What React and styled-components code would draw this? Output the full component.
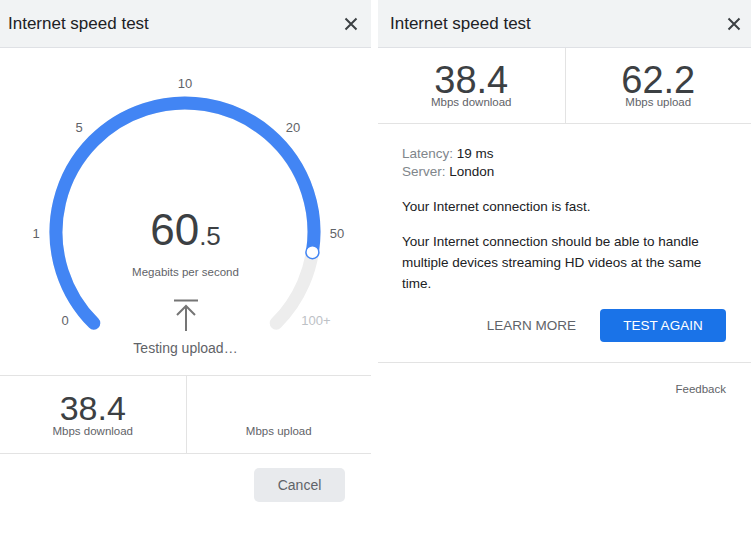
import React from 'react';
import styled, { createGlobalStyle } from 'styled-components';

const GlobalStyle = createGlobalStyle`
  html, body {
    margin: 0;
    padding: 0;
    background: #fff;
    overflow: hidden;
  }
  body {
    font-family: "Liberation Sans", Arial, sans-serif;
    color: #202124;
  }
`

const Page = styled.div`
  display: flex;
  gap: 7px;
  width: 751px;
  height: 541px;
`

const Panel = styled.div`
  display: flex;
  flex-direction: column;
  width: ${p => p.$width}px;
  flex-shrink: 0;
  background: #fff;
`

const Header = styled.div`
  display: flex;
  align-items: center;
  justify-content: space-between;
  height: 47px;
  padding: 0 ${p => p.$padR}px 0 ${p => p.$padL}px;
  background: #f1f3f4;
  border-bottom: 1px solid #dfe1e5;
`

const Title = styled.div`
  font-size: 17px;
  color: #202124;
`

const Close = styled.button`
  display: flex;
  padding: 0;
  border: 0;
  background: none;
  cursor: pointer;
`

const GaugeArea = styled.div`
  position: relative;
  height: 327px;
`

const Reading = styled.div`
  position: absolute;
  top: 160px;
  left: 0;
  right: 0;
  display: flex;
  flex-direction: column;
  align-items: center;
`

const Speed = styled.div`
  font-size: 44px;
  line-height: 44px;
  color: #3c4043;
`

const Decimal = styled.span`
  font-size: 26px;
`

const Unit = styled.div`
  margin-top: 7px;
  font-size: 11.5px;
  line-height: 14px;
  color: #5f6368;
`

const IconSlot = styled.div`
  display: flex;
  margin-top: 20px;
`

const Status = styled.div`
  margin-top: 7px;
  font-size: 14px;
  line-height: 18px;
  color: #5f6368;
`

const StatsRow = styled.div`
  display: grid;
  grid-template-columns: 1fr 1fr;
  height: ${p => p.$height}px;
  border-top: ${p => (p.$top ? '1px solid #e3e3e3' : '0')};
  border-bottom: 1px solid #e3e3e3;
`

const StatCell = styled.div`
  display: flex;
  flex-direction: column;
  align-items: center;
  justify-content: flex-end;
  padding-bottom: ${p => p.$pad}px;
  & + & {
    border-left: 1px solid #e3e3e3;
  }
`

const StatValue = styled.div`
  font-size: ${p => p.$size}px;
  line-height: ${p => p.$lh}px;
  color: #3c4043;
`

const StatLabel = styled.div`
  font-size: 11.5px;
  line-height: 14px;
  color: #5f6368;
`

const Footer = styled.div`
  display: flex;
  justify-content: flex-end;
  padding: 14px 26px 0;
`

const GreyButton = styled.button`
  width: 91px;
  height: 34px;
  border: 0;
  border-radius: 5px;
  background: #e8eaed;
  color: #5f6368;
  font-family: inherit;
  font-size: 14px;
`

const Details = styled.div`
  padding: 21px 25px 0 24px;
  font-size: 13.5px;
  line-height: 18px;
`

const Meta = styled.div`
  color: #80868b;
  & b {
    font-weight: normal;
    color: #202124;
  }
`

const Text = styled.p`
  margin: ${p => p.$mt}px 0 0;
  line-height: ${p => p.$lh}px;
  color: #202124;
`

const Actions = styled.div`
  display: flex;
  justify-content: flex-end;
  align-items: center;
  gap: 12px;
  margin: 15px -25px 0 -24px;
  padding: 0 25px 20px 0;
  border-bottom: 1px solid #e3e3e3;
`

const TextButton = styled.button`
  padding: 0 12px;
  height: 33px;
  border: 0;
  background: none;
  color: #5f6368;
  font-family: inherit;
  font-size: 13.5px;
`

const BlueButton = styled.button`
  width: 126px;
  height: 33px;
  border: 0;
  border-radius: 4px;
  background: #1a73e8;
  color: #fff;
  font-family: inherit;
  font-size: 13.5px;
`

const Feedback = styled.div`
  margin-top: 20px;
  padding-right: 25px;
  text-align: right;
  font-size: 11.5px;
  color: #5f6368;
`

const CloseIcon = () => (
  <svg width="14" height="14" viewBox="0 0 14 14">
    <path d="M1.5 1.5 L12.5 12.5 M12.5 1.5 L1.5 12.5" stroke="#3c4043" strokeWidth="2" />
  </svg>
)

const UploadIcon = () => (
  <svg width="26" height="33" viewBox="0 0 26 33">
    <path d="M1 1.5 H25 M13 7 V32 M4 16 L13 7 L22 16" stroke="#757575" strokeWidth="2" fill="none" />
  </svg>
)

// dial geometry
const CX = 185
const CY = 184
const R = 129

const point = deg => {
  const a = (deg * Math.PI) / 180
  return [CX + R * Math.cos(a), CY + R * Math.sin(a)]
}

const arc = (from, to) => {
  const [x1, y1] = point(from)
  const [x2, y2] = point(to)
  const large = to - from > 180 ? 1 : 0
  return `M ${x1} ${y1} A ${R} ${R} 0 ${large} 1 ${x2} ${y2}`
}

const ticks = [
  { label: '0', x: 65, y: 272 },
  { label: '1', x: 36, y: 185 },
  { label: '5', x: 79, y: 79 },
  { label: '10', x: 185, y: 35 },
  { label: '20', x: 293, y: 79 },
  { label: '50', x: 337, y: 185 },
  { label: '100+', x: 316, y: 272, dim: true },
]

const Gauge = ({ value }) => {
  const [kx, ky] = point(value)
  return (
    <svg width="371" height="327" viewBox="0 0 371 327" style={{ display: 'block' }}>
      <path d={arc(135, 405)} stroke="#ededed" strokeWidth="13" fill="none" strokeLinecap="round" />
      <path d={arc(135, value)} stroke="#4285f4" strokeWidth="13" fill="none" strokeLinecap="round" />
      <circle cx={kx} cy={ky} r="6.5" fill="#fff" stroke="#4285f4" strokeWidth="1.5" />
      {ticks.map(t => (
        <text
          key={t.label}
          x={t.x}
          y={t.y}
          textAnchor="middle"
          dominantBaseline="central"
          fontSize="13"
          fontFamily="Liberation Sans, Arial, sans-serif"
          fill={t.dim ? '#bdc1c6' : '#5f6368'}
        >
          {t.label}
        </text>
      ))}
    </svg>
  )
}

export default function App() {
  return (
    <>
      <GlobalStyle />
      <Page>
        <Panel $width={371}>
          <Header $padL={8} $padR={13}>
            <Title>Internet speed test</Title>
            <Close><CloseIcon /></Close>
          </Header>
          <GaugeArea>
            <Gauge value={369} />
            <Reading>
              <Speed>60<Decimal>.5</Decimal></Speed>
              <Unit>Megabits per second</Unit>
              <IconSlot><UploadIcon /></IconSlot>
              <Status>Testing upload…</Status>
            </Reading>
          </GaugeArea>
          <StatsRow $top $height={77}>
            <StatCell $pad={15}>
              <StatValue $size={34} $lh={32}>38.4</StatValue>
              <StatLabel>Mbps download</StatLabel>
            </StatCell>
            <StatCell $pad={15}>
              <StatLabel>Mbps upload</StatLabel>
            </StatCell>
          </StatsRow>
          <Footer>
            <GreyButton>Cancel</GreyButton>
          </Footer>
        </Panel>

        <Panel $width={373}>
          <Header $padL={12} $padR={10}>
            <Title>Internet speed test</Title>
            <Close><CloseIcon /></Close>
          </Header>
          <StatsRow $height={75}>
            <StatCell $pad={14}>
              <StatValue $size={38} $lh={30}>38.4</StatValue>
              <StatLabel>Mbps download</StatLabel>
            </StatCell>
            <StatCell $pad={14}>
              <StatValue $size={38} $lh={30}>62.2</StatValue>
              <StatLabel>Mbps upload</StatLabel>
            </StatCell>
          </StatsRow>
          <Details>
            <Meta>Latency: <b>19 ms</b></Meta>
            <Meta>Server: <b>London</b></Meta>
            <Text $mt={17} $lh={18}>Your Internet connection is fast.</Text>
            <Text $mt={15} $lh={21}>
              Your Internet connection should be able to handle multiple devices streaming HD videos at the same time.
            </Text>
            <Actions>
              <TextButton>LEARN MORE</TextButton>
              <BlueButton>TEST AGAIN</BlueButton>
            </Actions>
          </Details>
          <Feedback>Feedback</Feedback>
        </Panel>
      </Page>
    </>
  )
}
